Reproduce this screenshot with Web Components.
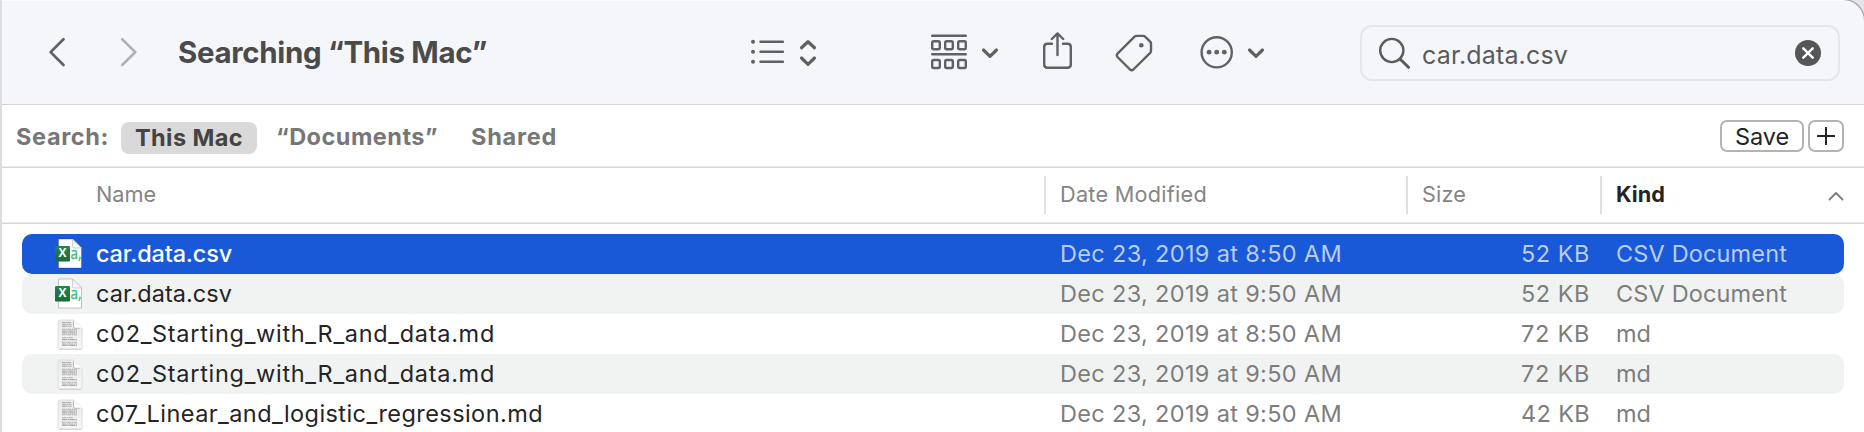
<!DOCTYPE html>
<html lang="en">
<head>
<meta charset="utf-8">
<title>Finder</title>
<style>
html,body{margin:0;height:432px;overflow:hidden;background:#fff}
body{font-family:Inter,"Liberation Sans",sans-serif}
</style>
</head>
<body>
<finder-window></finder-window>
<script>
const define = (name, html, setup) => customElements.define(name, class extends HTMLElement {
  connectedCallback() {
    if (this.shadowRoot) return;
    const root = this.attachShadow({ mode: 'open' });
    root.innerHTML = html;
    if (setup) setup(this, root);
  }
});

// Text run fitted to a fixed advance width through letter spacing.
define('fit-text', `<style>:host{display:block;white-space:pre;flex:none}span{display:inline-block}</style><span><slot></slot></span>`, (el, root) => {
  const span = root.querySelector('span');
  const want = +el.getAttribute('w');
  const n = [...el.textContent].length;
  el.style.width = want + 'px';
  span.style.letterSpacing = ((want - span.getBoundingClientRect().width) / n) + 'px';
});

const box = (x, y) => `<rect x="${x}" y="${y}" width="7.600" height="8" rx="1.500"/>`;
const icons = {
  back: [20, 32, '<path d="M16.500 2.200 3.600 15.100 16.500 28" />'],
  forward: [20, 32, '<path d="M3.200 2.200 16.300 15.100 3.200 28" />'],
  list: [34, 28, '<path d="M10.500 2.700H33M10.500 12.700H33M10.500 22.700H33"/><g fill="currentColor" stroke="none"><circle cx="3" cy="2.700" r="2"/><circle cx="3" cy="12.700" r="2"/><circle cx="3" cy="22.700" r="2"/></g>'],
  updown: [18, 30, '<path d="M2.500 9.700 9 3.700 15.500 9.700M2.500 20 9 26.300 15.500 20"/>'],
  group: [36, 38, `<path d="M1.200 1.700H34.800M1.200 20.300H34.800"/>${[1.2, 14.2, 27.2].map(x => box(x, 7.2) + box(x, 26)).join('')}`],
  down: [18, 12, '<path d="M2.500 3 9 9.300 15.500 3"/>'],
  share: [29, 42, '<path d="M9 11.800H4.500Q1.200 11.800 1.200 15V32.600Q1.200 35.800 4.500 35.800H24.500Q27.800 35.800 27.800 32.600V15Q27.800 11.800 24.500 11.800H20M14.500 23V1.500M8.800 7 14.500 1.400 20.200 7"/>'],
  tag: [38, 38, '<path d="M21.500 1.900H28.200Q29.500 1.900 30.300 2.800L35.200 7.700Q36 8.500 36 9.700V16.800Q36 18 35.200 18.900L18.400 35.500Q16.700 37 15 35.500L2.500 23Q1.100 21.300 2.500 19.600L19.300 2.800Q20.300 1.900 21.500 1.900Z"/><circle cx="26.300" cy="11.300" r="2.300" fill="currentColor" stroke="none"/>'],
  more: [34, 34, '<circle cx="16.700" cy="16.300" r="15.100"/><g fill="currentColor" stroke="none"><circle cx="9.100" cy="16.200" r="2.400"/><circle cx="16.700" cy="16.200" r="2.400"/><circle cx="24.300" cy="16.200" r="2.400"/></g>'],
  search: [32, 32, '<circle cx="12.800" cy="13.500" r="11.600"/><path d="M21 22 29.500 30.300" stroke-width="3"/>'],
  clear: [26, 26, '<circle cx="13" cy="13" r="13" fill="currentColor" stroke="none"/><path stroke="#fff" d="M8.300 8.300 17.700 17.700M17.700 8.300 8.300 17.700"/>'],
  plus: [18, 18, '<path d="M.8 9H17.200M9 .8V17.200"/>'],
  sort: [16, 10, '<path d="M1.500 8.500 8 2 14.500 8.500"/>']
};
define('line-icon', `<style>:host{display:block;flex:none}svg{display:block;fill:none;stroke:currentColor;stroke-width:var(--stroke,2.4);stroke-linecap:round;stroke-linejoin:round}</style><div></div>`, (el, root) => {
  const [w, h, body] = icons[el.getAttribute('name')];
  root.querySelector('div').innerHTML = `<svg width="${w}" height="${h}" viewBox="0 0 ${w} ${h}">${body}</svg>`;
});

const csvSvg = `<svg width="28" height="34" viewBox="0 0 28 34"><defs><linearGradient id="g" x2="0" y2="1"><stop stop-color="#24864b"/><stop offset="1" stop-color="#176b38"/></linearGradient></defs>
<path d="M3.500 2H17.500L26.500 11V31H3.500Z" fill="#fff" stroke="#000" stroke-opacity=".25" stroke-width=".9"/><path d="M17.500 2V9.500Q17.500 11 19 11H26.500Z" fill="#f6f6f6" stroke="#c4c4c4" stroke-width=".8"/>
<text x="15.400" y="21.700" font-size="17" textLength="11" lengthAdjust="spacingAndGlyphs" font-family="Open Sans,sans-serif" fill="#3cbb7b" stroke="#3cbb7b" stroke-width=".35">a,</text><rect x="0" y="9" width="15" height="15.500" rx="1.200" fill="url(#g)"/><text x="7.500" y="20.300" text-anchor="middle" font-size="12" font-weight="700" font-family="Open Sans,sans-serif" fill="#fff">X</text></svg>`;
const rules = [5.5, 7.3, 9.1, 12.3, 14.1, 15.9, 17.7, 20.8, 22.6, 25.2, 27, 28.4].map((y, i) => `<path d="M7 ${y}H${i < 3 ? 16.5 : i === 7 ? 18 : 22}" stroke="#acacac" stroke-width="1.100" stroke-dasharray="${3 + i % 3} .6 2 .4"/>`).join('');
const docSvg = `<svg width="28" height="34" viewBox="0 0 28 34"><defs><linearGradient id="p" x2="0" y2="1"><stop stop-color="#e9e9e9"/><stop offset="1" stop-color="#f6f6f6"/></linearGradient></defs><path d="M4.500 3H19L27.200 11V30.500Q27.200 32 25.700 32H4.500Q3 32 3 30.500V4.500Q3 3 4.500 3Z" fill="url(#p)" stroke="#dcdcdc" stroke-width=".8"/><path d="M4 32.300H26.500" stroke="#c8c8c8" stroke-width=".8"/>${rules}<path d="M18.800 3V9.500Q18.800 11 20.300 11H27.200Z" fill="#fdfdfd"/><path d="M18.500 4V9.500Q18.500 11.300 20.300 11.300H25" fill="none" stroke="#aaa" stroke-width=".7"/></svg>`;
define('file-icon', `<style>:host{display:block;width:28px;height:34px;flex:none}svg{display:block}</style><div></div>`, (el, root) => {
  root.querySelector('div').innerHTML = el.getAttribute('type') === 'csv' ? csvSvg : docSvg;
});

define('file-row', `<style>
:host{display:grid;grid-template-columns:33px 41px 964px 408px 122px 1fr;height:40px;align-items:center;border-radius:10px;font-size:23.5px;line-height:30px;color:#7d7d7d}
:host([alt]){background:#f1f3f3}
:host([selected]){background:#1958d7;color:#b9cdf5}
.size{justify-self:end}
.kind{padding-left:26px}
</style><span></span><slot name="icon"></slot><slot name="name"></slot><slot name="date"></slot><div class="size"><slot name="size"></slot></div><div class="kind"><slot name="kind"></slot></div>`);

define('file-list', `<style>:host{display:flex;flex-direction:column;padding:10px 20px 0 20px}fit-text{position:relative;top:-.5px}fit-text.name{color:#242424}file-row[selected] fit-text.name{color:#fff;font-weight:500}</style><div></div>`, (el, root) => {
  const rows = [
    ['csv','car.data.csv',136,'8:50','52',69],['csv','car.data.csv',136,'9:50','52',69],
    ['md','c02_Starting_with_R_and_data.md',399,'8:50','72',69],['md','c02_Starting_with_R_and_data.md',399,'9:50','72',69],
    ['md','c07_Linear_and_logistic_regression.md',447,'9:50','42',69]];
  root.querySelector('div').innerHTML = rows.map(([t,n,w,d,s,sw],i) => `<file-row ${i===0?'selected':i%2?'alt':''}><file-icon slot="icon" type="${t}"></file-icon><fit-text class="name" slot="name" w="${w}">${n}</fit-text><fit-text slot="date" w="282">Dec 23, 2019 at ${d} AM</fit-text><fit-text slot="size" w="${sw}">${s} KB</fit-text><fit-text slot="kind" w="${t==='csv'?171:35}">${t==='csv'?'CSV Document':'md'}</fit-text></file-row>`).join('');
});

define('search-field', `<style>:host{display:flex;align-items:center;box-sizing:border-box;width:480px;height:56px;border:2px solid #e5e6ea;border-radius:12px;padding:0 17px;color:#5a5b5d;font-size:25px}
.q{margin:4px auto 0 11px}.x{color:#555658}</style><line-icon name="search"></line-icon><fit-text class="q" w="146">car.data.csv</fit-text><line-icon class="x" name="clear"></line-icon>`);

define('finder-toolbar', `<style>
:host{display:flex;align-items:center;box-sizing:border-box;height:105px;padding:0 24px 0 45px;background:#f5f6fa;border-bottom:1px solid #d3d3d4;border-top:1px solid #fcfcfd;border-top-right-radius:21px;box-shadow:1px -1px 0 #a5a5aa;color:#606164}
.fwd{margin-left:52px;color:#b0b1b5}.back,.fwd{--stroke:2.700}
.title{margin:0 0 2px 39px;font-size:29.5px;font-weight:650;color:#4b4b4b}
.chev{--stroke:3.200}
</style>
<line-icon class="back" name="back"></line-icon><line-icon class="fwd" name="forward"></line-icon>
<fit-text class="title" w="309">Searching “This Mac”</fit-text>
<line-icon name="list" style="margin-left:263px"></line-icon><line-icon class="chev" name="updown" style="margin-left:15px"></line-icon>
<line-icon name="group" style="margin-left:114px"></line-icon><line-icon class="chev" name="down" style="margin-left:14px"></line-icon>
<line-icon name="share" style="margin-left:44px"></line-icon><line-icon name="tag" style="margin-left:43px"></line-icon>
<line-icon name="more" style="margin-left:47px"></line-icon><line-icon class="chev" name="down" style="margin-left:13px"></line-icon>
<search-field style="margin-left:auto"></search-field>`);

define('scope-bar', `<style>
:host{display:flex;align-items:center;box-sizing:border-box;height:63px;padding:0 20px 0 14px;background:linear-gradient(#fff 61px,#ececec 61px 62px,#d6d6d6 62px);padding-bottom:2px;font-size:23.5px;font-weight:680;color:#777}
.t{margin-top:2px}
.on{display:flex;align-items:center;justify-content:center;box-sizing:border-box;width:136px;height:32px;padding-bottom:2px;border-radius:8px;background:#d9d9d9;color:#434343;margin:5px 19px 0 13px}
.btn{display:flex;align-items:center;justify-content:center;box-sizing:border-box;height:32px;border:2px solid #b3b3b3;border-radius:7px;color:#242424;font-weight:400;margin-top:1px}
.save{width:84px;margin-left:auto}.add{width:36px;margin-left:4px;--stroke:2}
</style><fit-text class="t" w="93">Search:</fit-text><div class="on" style="margin-left:12px"><fit-text w="108">This Mac</fit-text></div><fit-text class="t" w="162">“Documents”</fit-text><fit-text class="t" w="86" style="margin-left:33px">Shared</fit-text>
<div class="btn save"><fit-text w="54">Save</fit-text></div><div class="btn add"><line-icon name="plus"></line-icon></div>`);

define('column-header', `<style>
:host{display:grid;grid-template-columns:1042px 362px 194px 1fr;align-items:center;box-sizing:border-box;height:56px;padding-bottom:2px;background:linear-gradient(#fff 54px,#ececec 54px 55px,#d6d6d6 55px);font-size:21.7px;color:#858585}
.c{display:flex;align-items:center;height:38px;border-left:2px solid #e0e0e0;padding:0 0 2px 14px;box-sizing:border-box}
.c.name{border:0;padding-left:94px}.c.kind{color:#242424;font-weight:700;justify-content:space-between;padding-right:20px}
.kind line-icon{color:#808080;--stroke:2;margin-top:4px}
</style><div class="c name"><fit-text w="60">Name</fit-text></div><div class="c"><fit-text w="147">Date Modified</fit-text></div><div class="c"><fit-text w="44">Size</fit-text></div><div class="c kind"><fit-text w="49">Kind</fit-text><line-icon name="sort"></line-icon></div>`);

define('finder-window', `<style>:host{display:block;box-sizing:border-box;width:1864px;height:432px;overflow:hidden;border-left:2px solid #dcdce2;background:linear-gradient(#e4e4ea 0 40px,#fff 40px)}</style>
<finder-toolbar></finder-toolbar><scope-bar></scope-bar><column-header></column-header><file-list></file-list>`);
</script>
</body>
</html>
